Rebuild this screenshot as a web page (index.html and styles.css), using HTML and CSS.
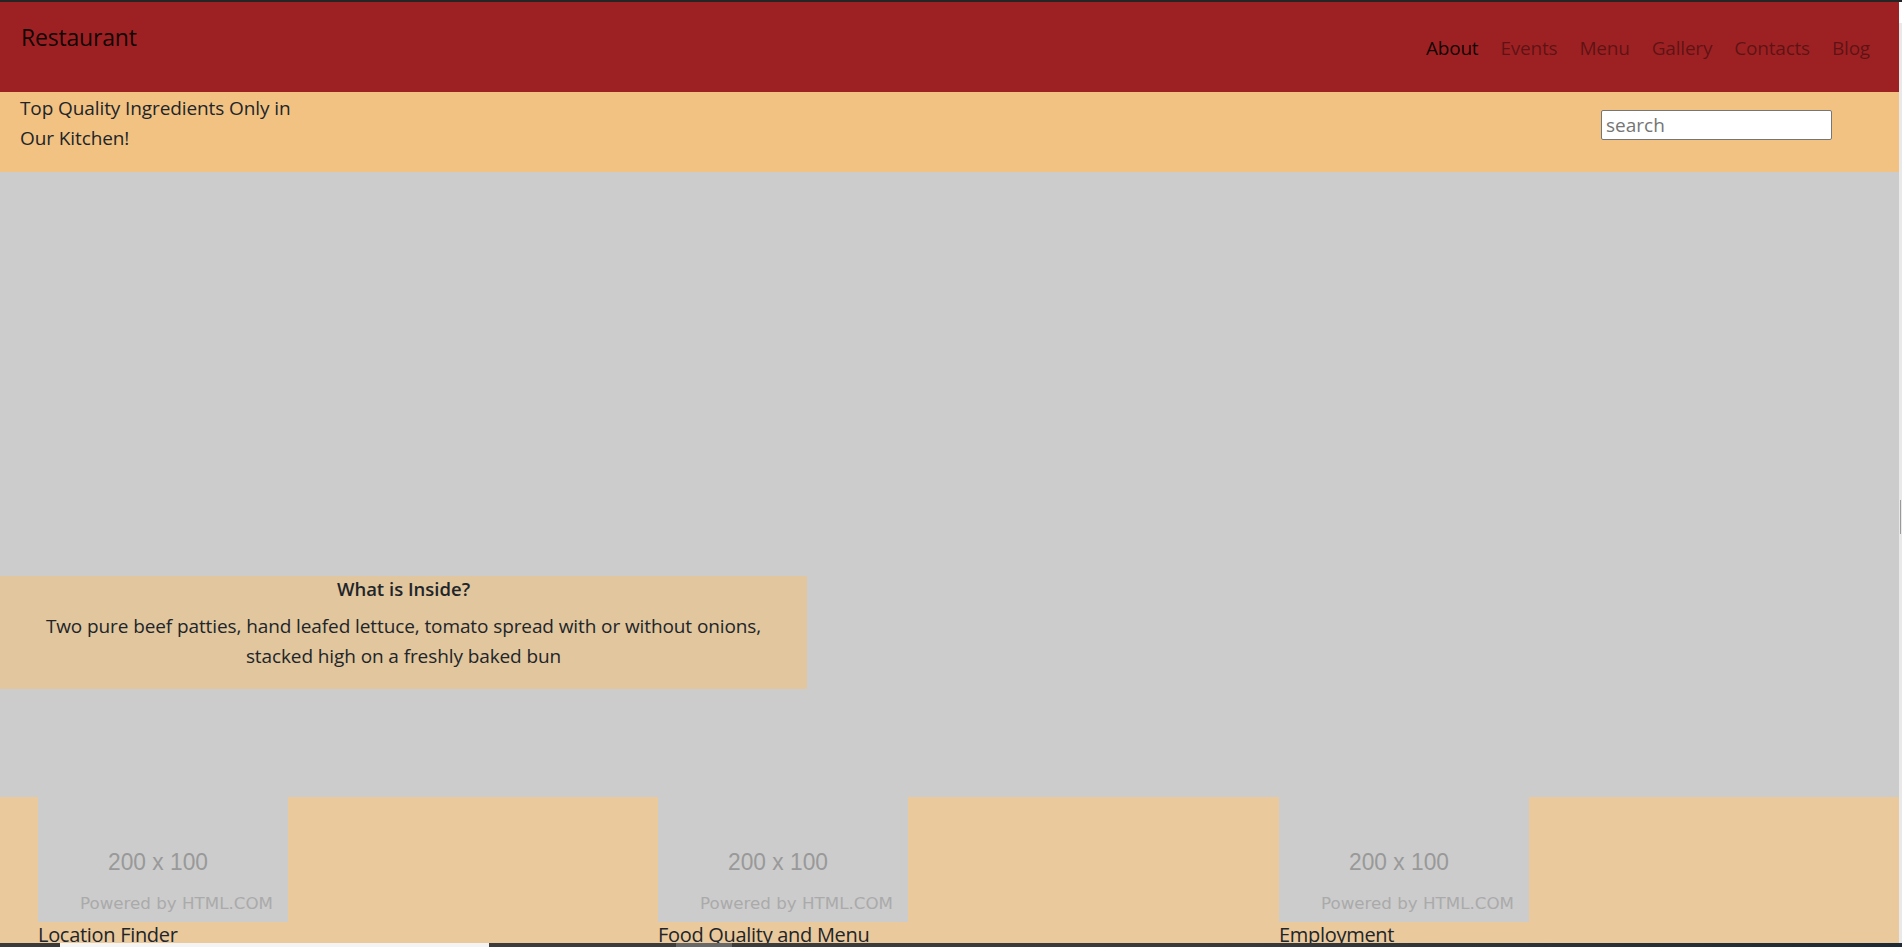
FILE: index.html
```html
<!DOCTYPE html>
<html lang="en">
<head>
<meta charset="utf-8">
<title>Restaurant</title>
<link rel="stylesheet" href="styles.css">
</head>
<body>
<div class="topline"></div>
<div class="frame">
  <div class="page">
    <header class="navbar">
      <a class="brand" href="#">Restaurant</a>
      <nav class="nav">
        <a class="nav-link active" href="#">About</a>
        <a class="nav-link" href="#">Events</a>
        <a class="nav-link" href="#">Menu</a>
        <a class="nav-link" href="#">Gallery</a>
        <a class="nav-link" href="#">Contacts</a>
        <a class="nav-link" href="#">Blog</a>
      </nav>
    </header>
    <section class="subbar">
      <p class="tagline">Top Quality Ingredients Only in<br>Our Kitchen!</p>
      <input class="search" type="text" placeholder="search">
    </section>
    <section class="hero">
      <div class="inside">
        <h4 class="inside-title">What is Inside?</h4>
        <p class="inside-text">Two pure beef patties, hand leafed lettuce, tomato spread with or without onions,<br>stacked high on a freshly baked bun</p>
      </div>
    </section>
    <section class="features">
      <div class="feature">
        <svg class="ph" viewBox="0 0 250 125" width="250" height="125"><rect width="250" height="125" fill="#cccccc"/><text x="70" y="73" textLength="100" lengthAdjust="spacingAndGlyphs" class="ph-size">200 x 100</text><text x="42" y="112" textLength="193" lengthAdjust="spacingAndGlyphs" class="ph-by">Powered by HTML.COM</text></svg>
        <h5 class="feature-title">Location Finder</h5>
      </div>
      <div class="feature">
        <svg class="ph" viewBox="0 0 250 125" width="250" height="125"><rect width="250" height="125" fill="#cccccc"/><text x="70" y="73" textLength="100" lengthAdjust="spacingAndGlyphs" class="ph-size">200 x 100</text><text x="42" y="112" textLength="193" lengthAdjust="spacingAndGlyphs" class="ph-by">Powered by HTML.COM</text></svg>
        <h5 class="feature-title">Food Quality and Menu</h5>
      </div>
      <div class="feature">
        <svg class="ph" viewBox="0 0 250 125" width="250" height="125"><rect width="250" height="125" fill="#cccccc"/><text x="70" y="73" textLength="100" lengthAdjust="spacingAndGlyphs" class="ph-size">200 x 100</text><text x="42" y="112" textLength="193" lengthAdjust="spacingAndGlyphs" class="ph-by">Powered by HTML.COM</text></svg>
        <h5 class="feature-title">Employment</h5>
      </div>
    </section>
  </div>
  <div class="vscroll"><div class="vthumb"></div></div>
</div>
<div class="taskbar">
  <div class="tb-left"></div>
  <div class="tb-white"></div>
  <div class="tb-mid"></div>
  <div class="tb-light"></div>
  <div class="tb-right"></div>
</div>
</body>
</html>
```
FILE: styles.css
```css
html, body {
  margin: 0;
  padding: 0;
  height: 947px;
  overflow: hidden;
}
body {
  display: flex;
  flex-direction: column;
  font-family: "Open Sans", "Noto Sans", sans-serif;
  color: #212529;
  background: #ffffff;
}
.topline {
  height: 2px;
  background: #252525;
  flex: none;
}
.frame {
  flex: 1;
  display: flex;
  min-height: 0;
}
.page {
  flex: 1;
  display: flex;
  flex-direction: column;
  min-width: 0;
  overflow: hidden;
}
.vscroll {
  width: 3px;
  background: #e9e9e9;
  border-top: 21px solid #ffffff;
  flex: none;
}
.vthumb {
  width: 1px;
  height: 34px;
  margin-top: 477px;
  margin-left: 1px;
  background: #9a9a9a;
}

/* header */
.navbar {
  height: 90px;
  background: #9d2023;
  display: flex;
  justify-content: space-between;
  align-items: flex-start;
  padding: 0 20px 0 21px;
  flex: none;
}
.brand {
  margin-top: 20px;
  font-size: 23px;
  line-height: 30px;
  color: rgba(0, 0, 0, 0.9);
  text-decoration: none;
  letter-spacing: -0.2px;
}
.nav {
  display: flex;
  margin-top: 31px;
}
.nav-link {
  font-size: 19px;
  line-height: 30px;
  padding: 0 11px;
  color: rgba(0, 0, 0, 0.42);
  text-decoration: none;
  letter-spacing: -0.2px;
}
.nav-link:last-child {
  padding-right: 9px;
}
.nav-link.active {
  color: rgba(0, 0, 0, 0.9);
}

/* sub bar */
.subbar {
  height: 80px;
  background: #f2c283;
  display: flex;
  justify-content: space-between;
  align-items: flex-start;
  padding: 0 67px 0 20px;
  flex: none;
}
.tagline {
  margin: 1px 0 0;
  font-size: 19px;
  line-height: 30px;
  letter-spacing: -0.1px;
}
.search {
  margin-top: 18px;
  width: 231px;
  height: 30px;
  box-sizing: border-box;
  border: 1px solid #767676;
  border-radius: 2px;
  padding: 0 4px;
  font-family: "Open Sans", "Noto Sans", sans-serif;
  font-size: 19px;
  color: #212529;
  background: #ffffff;
}
.search::placeholder {
  color: #757575;
}

/* hero */
.hero {
  height: 625px;
  background: #cccccc;
  display: flex;
  flex-direction: column;
  justify-content: flex-end;
  padding-bottom: 108px;
  box-sizing: border-box;
  flex: none;
}
.inside {
  width: 807px;
  height: 113px;
  box-sizing: border-box;
  background: #e1c69e;
  text-align: center;
  padding-top: 1px;
}
.inside-title {
  margin: 0 0 10px;
  font-size: 18.5px;
  font-weight: 600;
  line-height: 24px;
}
.inside-text {
  margin: 0;
  font-size: 19px;
  line-height: 30px;
  letter-spacing: -0.1px;
}

/* features */
.features {
  flex: 1;
  background: #eac99c;
  display: grid;
  grid-template-columns: 620px 621px 1fr;
  padding-left: 38px;
  overflow: hidden;
}
.feature {
  display: flex;
  flex-direction: column;
  align-items: flex-start;
}
.ph {
  display: block;
}
.ph-size {
  font-family: "Liberation Sans", Arial, sans-serif;
  font-size: 24px;
  fill: #999999;
}
.ph-by {
  font-family: "DejaVu Sans", sans-serif;
  font-size: 15px;
  fill: #aaaaaa;
}
.feature-title {
  margin: 0;
  padding-top: 1px;
  font-size: 20px;
  font-weight: 500;
  line-height: 24px;
  letter-spacing: -0.3px;
}

/* bottom bar */
.taskbar {
  height: 4px;
  flex: none;
  display: flex;
}
.tb-left {
  width: 60px;
  background: #3a3a3a;
}
.tb-white {
  width: 429px;
  background: #f4f4f4;
}
.tb-mid {
  width: 187px;
  background: #3c3c3c;
}
.tb-light {
  width: 56px;
  background: #686868;
}
.tb-right {
  flex: 1;
  background: linear-gradient(to right, #3c3c3c, #3a3a3a 40%, #1d2a35);
}
```
